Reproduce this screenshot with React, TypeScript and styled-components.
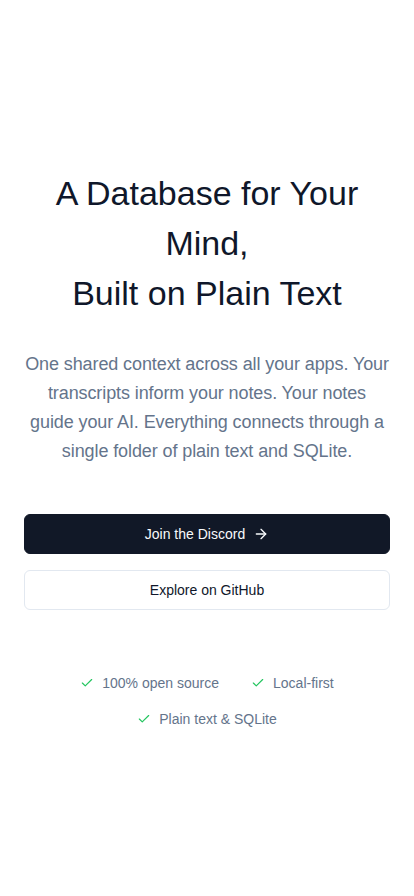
import React from "react";
import styled, { createGlobalStyle } from "styled-components";
import { ArrowRight, Check } from "lucide-react";

const GlobalStyle = createGlobalStyle`
  * { box-sizing: border-box; }
  html, body { margin: 0; padding: 0; background: #fff; }
  body {
    font-family: "Liberation Sans", Arial, sans-serif;
    -webkit-font-smoothing: antialiased;
  }
`;

const Page = styled.main`
  min-height: 100vh;
  display: flex;
  flex-direction: column;
  justify-content: center;
  padding: 0 24px;
`;

const Hero = styled.section`
  display: flex;
  flex-direction: column;
  align-items: stretch;
  text-align: center;
`;

const Title = styled.h1`
  margin: 0;
  font-size: 34px;
  line-height: 50px;
  font-weight: 400;
  color: #0f172a;
`;

const Lead = styled.p`
  margin: 32px 0 0;
  font-size: 18px;
  line-height: 29.25px;
  letter-spacing: -0.1px;
  color: #64748b;
`;

const Actions = styled.div`
  margin-top: 47px;
  display: flex;
  flex-direction: column;
  gap: 16px;
`;

const Button = styled.a<{ $primary?: boolean }>`
  height: 40px;
  display: flex;
  align-items: center;
  justify-content: center;
  gap: 8px;
  border-radius: 6px;
  font-size: 14px;
  font-weight: 400;
  text-decoration: none;
  cursor: pointer;
  background: ${(p) => (p.$primary ? "#111827" : "#ffffff")};
  color: ${(p) => (p.$primary ? "#f8fafc" : "#0f172a")};
  border: 1px solid ${(p) => (p.$primary ? "#111827" : "#e2e8f0")};
`;

const Features = styled.ul`
  list-style: none;
  margin: 63px 0 0;
  padding: 0;
  display: flex;
  flex-wrap: wrap;
  justify-content: center;
  column-gap: 32px;
  row-gap: 16px;
`;

const Feature = styled.li`
  display: flex;
  align-items: center;
  gap: 8px;
  font-size: 14px;
  line-height: 20px;
  color: #64748b;

  svg {
    color: #22c55e;
  }
`;

const features = ["100% open source", "Local-first", "Plain text & SQLite"];

export default function App() {
  return (
    <>
      <GlobalStyle />
      <Page>
        <Hero>
          <Title>
            A Database for Your Mind,
            <br />
            Built on Plain Text
          </Title>
          <Lead>
            One shared context across all your apps. Your
            <br />
            transcripts inform your notes. Your notes
            <br />
            guide your AI. Everything connects through a
            <br />
            single folder of plain text and SQLite.
          </Lead>
          <Actions>
            <Button $primary>
              Join the Discord
              <ArrowRight size={16} />
            </Button>
            <Button>Explore on GitHub</Button>
          </Actions>
          <Features>
            {features.map((f) => (
              <Feature key={f}>
                <Check size={14} strokeWidth={2} />
                {f}
              </Feature>
            ))}
          </Features>
        </Hero>
      </Page>
    </>
  );
}
